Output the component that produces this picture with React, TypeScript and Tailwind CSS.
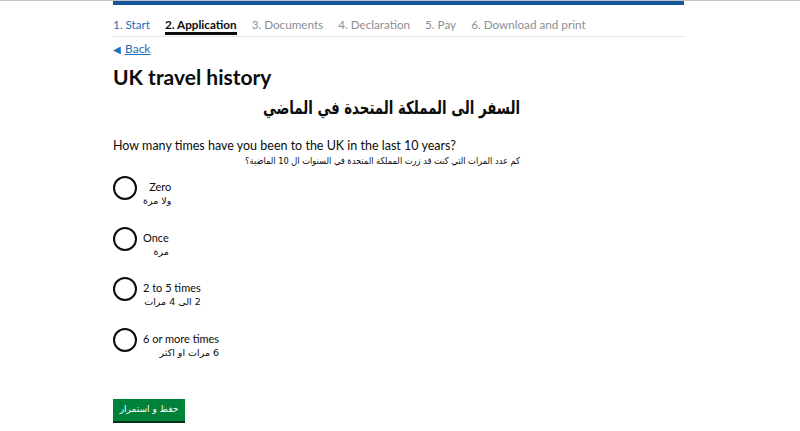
import React from "react";

const steps = [
  { label: "1. Start", cls: "text-[#1d70b8]" },
  { label: "2. Application", cls: "text-[#0b0c0c] font-bold border-b-[3px] border-[#0b0c0c]" },
  { label: "3. Documents", cls: "text-[#8a8f93]" },
  { label: "4. Declaration", cls: "text-[#8a8f93]" },
  { label: "5. Pay", cls: "text-[#8a8f93]" },
  { label: "6. Download and print", cls: "text-[#8a8f93]" },
];

const options = [
  { en: "Zero", ar: "ولا مرة" },
  { en: "Once", ar: "مرة" },
  { en: "2 to 5 times", ar: "2 الى 4 مرات" },
  { en: "6 or more times", ar: "6 مرات او اكثر" },
];

export default function App() {
  return (
    <div
      className="w-[800px] h-[431px] bg-white overflow-hidden border-t border-[#c4c4c4]"
      style={{ fontFamily: "Lato, 'Liberation Sans', sans-serif" }}
    >
      <div className="ml-[113px] w-[571px] -mt-px">
        <div className="h-[5px] bg-[#14569b]" />
        <nav className="flex gap-[15px] pt-[11px] pb-px border-b border-[#e6e6e6] text-[11.7px] leading-[16px]">
          {steps.map((s) => (
            <span key={s.label} className={s.cls}>
              {s.label}
            </span>
          ))}
        </nav>
        <div className="mt-[4px] flex items-center gap-[4px] text-[12px] leading-[16px] text-[#1d70b8]">
          <span className="text-[10px]">◀</span>
          <span className="underline">Back</span>
        </div>
        <h1 className="mt-[7px] text-[21px] leading-[26px] font-bold text-[#0b0c0c]">UK travel history</h1>
        <div className="w-[407px]">
          <h2
            dir="rtl"
            className="mt-[4px] text-right text-[18px] leading-[28px] font-bold text-[#0b0c0c] origin-right scale-x-[0.74]"
            style={{ fontFamily: "'DejaVu Sans', sans-serif" }}
          >
            السفر الى المملكة المتحدة في الماضي
          </h2>
          <p className="mt-[16px] text-[12.5px] leading-[16px] text-[#0b0c0c]">
            How many times have you been to the UK in the last 10 years?
          </p>
          <p
            dir="rtl"
            className="text-right text-[9.5px] leading-[14px] text-[#0b0c0c] origin-right scale-x-[0.87]"
            style={{ fontFamily: "'DejaVu Sans', sans-serif" }}
          >
            كم عدد المرات التي كنت قد زرت المملكة المتحدة في السنوات ال 10 الماضية؟
          </p>
        </div>
        <div className="mt-[8px] flex flex-col gap-[18.5px]">
          {options.map((o) => (
            <div key={o.en} className="flex items-start">
              <span className="w-[24px] h-[24px] rounded-full border-2 border-[#0b0c0c] shrink-0" />
              <div className="ml-[6px] pt-[4px] text-right text-[11px] text-[#0b0c0c]">
                <div className="leading-[14px]">{o.en}</div>
                <div
                  dir="rtl"
                  className="leading-[14px] text-[9.5px]"
                  style={{ fontFamily: "'DejaVu Sans', sans-serif" }}
                >
                  {o.ar}
                </div>
              </div>
            </div>
          ))}
        </div>
        <button
          className="mt-[39px] w-[72px] h-[22px] bg-[#00823b] text-white text-[9px] shadow-[0_2px_0_#003618]"
          style={{ fontFamily: "'DejaVu Sans', sans-serif" }}
          dir="rtl"
        >
          حفظ و استمرار
        </button>
      </div>
    </div>
  );
}
